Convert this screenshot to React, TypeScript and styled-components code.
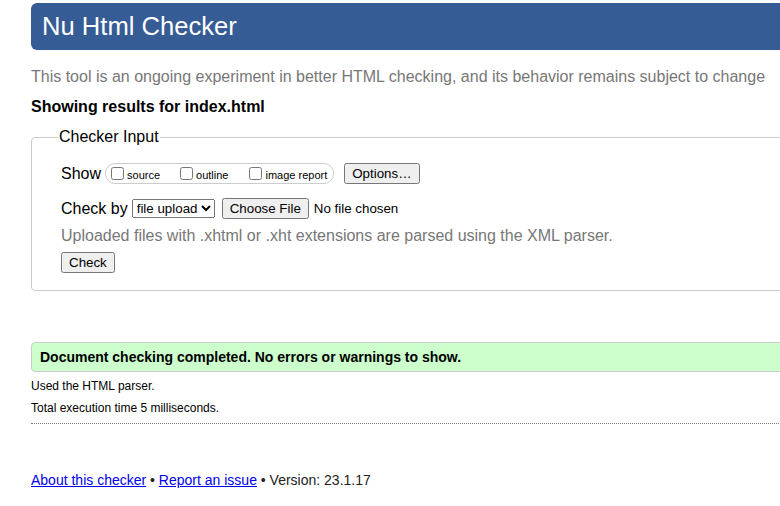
import styled, { createGlobalStyle } from "styled-components";

const GlobalStyle = createGlobalStyle`
  html, body {
    margin: 0;
    padding: 0;
    overflow: hidden;
    background: #fff;
  }
  body {
    font-family: "Liberation Sans", Arial, sans-serif;
    color: #000;
  }
`;

export default function App() {
  return (
    <>
      <GlobalStyle />
      <Page>
        <Header>
          <Title>Nu Html Checker</Title>
        </Header>
        <Intro>
          This tool is an ongoing experiment in better HTML checking, and its behavior remains subject to change
        </Intro>
        <Showing>Showing results for index.html</Showing>

        <Fieldset>
          <Legend>Checker Input</Legend>
          <Row>
            <RowLabel>Show</RowLabel>
            <ShowGroup>
              <CheckLabel $gap={20}>
                <Box type="checkbox" />
                source
              </CheckLabel>
              <CheckLabel $gap={21}>
                <Box type="checkbox" />
                outline
              </CheckLabel>
              <CheckLabel $gap={0}>
                <Box type="checkbox" />
                image report
              </CheckLabel>
            </ShowGroup>
            <Button type="button">Options…</Button>
          </Row>
          <Row>
            <RowLabel>Check by</RowLabel>
            <Select defaultValue="file">
              <option value="address">address</option>
              <option value="file">file upload</option>
              <option value="text">text input</option>
            </Select>
            <FileButton type="button">Choose File</FileButton>
            <NoFile>No file chosen</NoFile>
          </Row>
          <Hint>Uploaded files with .xhtml or .xht extensions are parsed using the XML parser.</Hint>
          <CheckButton type="button">Check</CheckButton>
        </Fieldset>

        <Success>Document checking completed. No errors or warnings to show.</Success>
        <Detail>Used the HTML parser.</Detail>
        <Detail>Total execution time 5 milliseconds.</Detail>
        <Divider />

        <Footer>
          <Link href="#">About this checker</Link> • <Link href="#">Report an issue</Link> • Version: 23.1.17
        </Footer>
      </Page>
    </>
  );
}

const Page = styled.div`
  padding: 3px 0 0 31px;
  width: 800px;
`;

const Header = styled.header`
  background: #365c95;
  border-radius: 6px 0 0 6px;
  height: 47px;
  display: flex;
  align-items: center;
  padding-left: 11px;
`;

const Title = styled.h1`
  margin: 0;
  color: #fff;
  font-size: 25.6px;
  font-weight: normal;
  line-height: 1;
`;

const Intro = styled.p`
  margin: 17px 0 0;
  color: #777;
  font-size: 16px;
  line-height: 19px;
`;

const Showing = styled.p`
  margin: 11px 0 0;
  font-size: 16px;
  font-weight: bold;
  line-height: 19px;
`;

const Fieldset = styled.fieldset`
  margin: 12px 0 0;
  padding: 8px 29px 17px;
  border: 1px solid #ccc;
  border-radius: 4px 0 0 4px;
`;

const Legend = styled.legend`
  margin-left: -3px;
  padding: 0 1px;
  font-size: 16px;
`;

const Row = styled.div`
  display: flex;
  align-items: center;
  height: 21px;
  margin-top: 9px;
  & + & {
    margin-top: 14px;
  }
`;

const RowLabel = styled.span`
  font-size: 16px;
  margin-right: 4px;
`;

const ShowGroup = styled.span`
  display: inline-flex;
  align-items: center;
  height: 19px;
  padding: 0 6px 0 5px;
  border: 1px solid #ccc;
  border-radius: 10px;
  margin-right: 10px;
`;

const CheckLabel = styled.label<{ $gap: number }>`
  display: inline-flex;
  align-items: center;
  font-size: 11px;
  margin-right: ${(p) => p.$gap}px;
  padding-top: 2px;
`;

const Box = styled.input`
  margin: 0 3px 2px 0;
  width: 13px;
  height: 13px;
`;

const Button = styled.button`
  font-family: "Liberation Sans", Arial, sans-serif;
  font-size: 13.33px;
  height: 21px;
  padding: 1px 6px;
`;

const Select = styled.select`
  font-family: "Liberation Sans", Arial, sans-serif;
  font-size: 13.33px;
  height: 19px;
  margin-right: 7px;
`;

const FileButton = styled(Button)`
  padding: 1px 6px;
`;

const NoFile = styled.span`
  font-size: 13.33px;
  margin-left: 5px;
`;

const Hint = styled.p`
  margin: 7px 0 0;
  color: #777;
  font-size: 16px;
  line-height: 19px;
`;

const CheckButton = styled(Button)`
  margin-top: 7px;
  padding: 1px 6px;
`;

const Success = styled.div`
  margin-top: 51px;
  height: 28px;
  display: flex;
  align-items: center;
  padding-left: 8px;
  background: #ccffcc;
  border: 1px solid #ccc;
  border-radius: 4px 0 0 4px;
  font-size: 14px;
  font-weight: bold;
`;

const Detail = styled.p`
  margin: 7px 0 0;
  font-size: 12px;
  line-height: 15px;
  & + & {
    margin-top: 7px;
  }
`;

const Divider = styled.hr`
  margin: 7px 0 0;
  border: 0;
  border-top: 1px dotted #777;
`;

const Footer = styled.footer`
  margin-top: 48px;
  font-size: 14px;
  color: #222;
`;

const Link = styled.a`
  color: #0000ee;
`;
